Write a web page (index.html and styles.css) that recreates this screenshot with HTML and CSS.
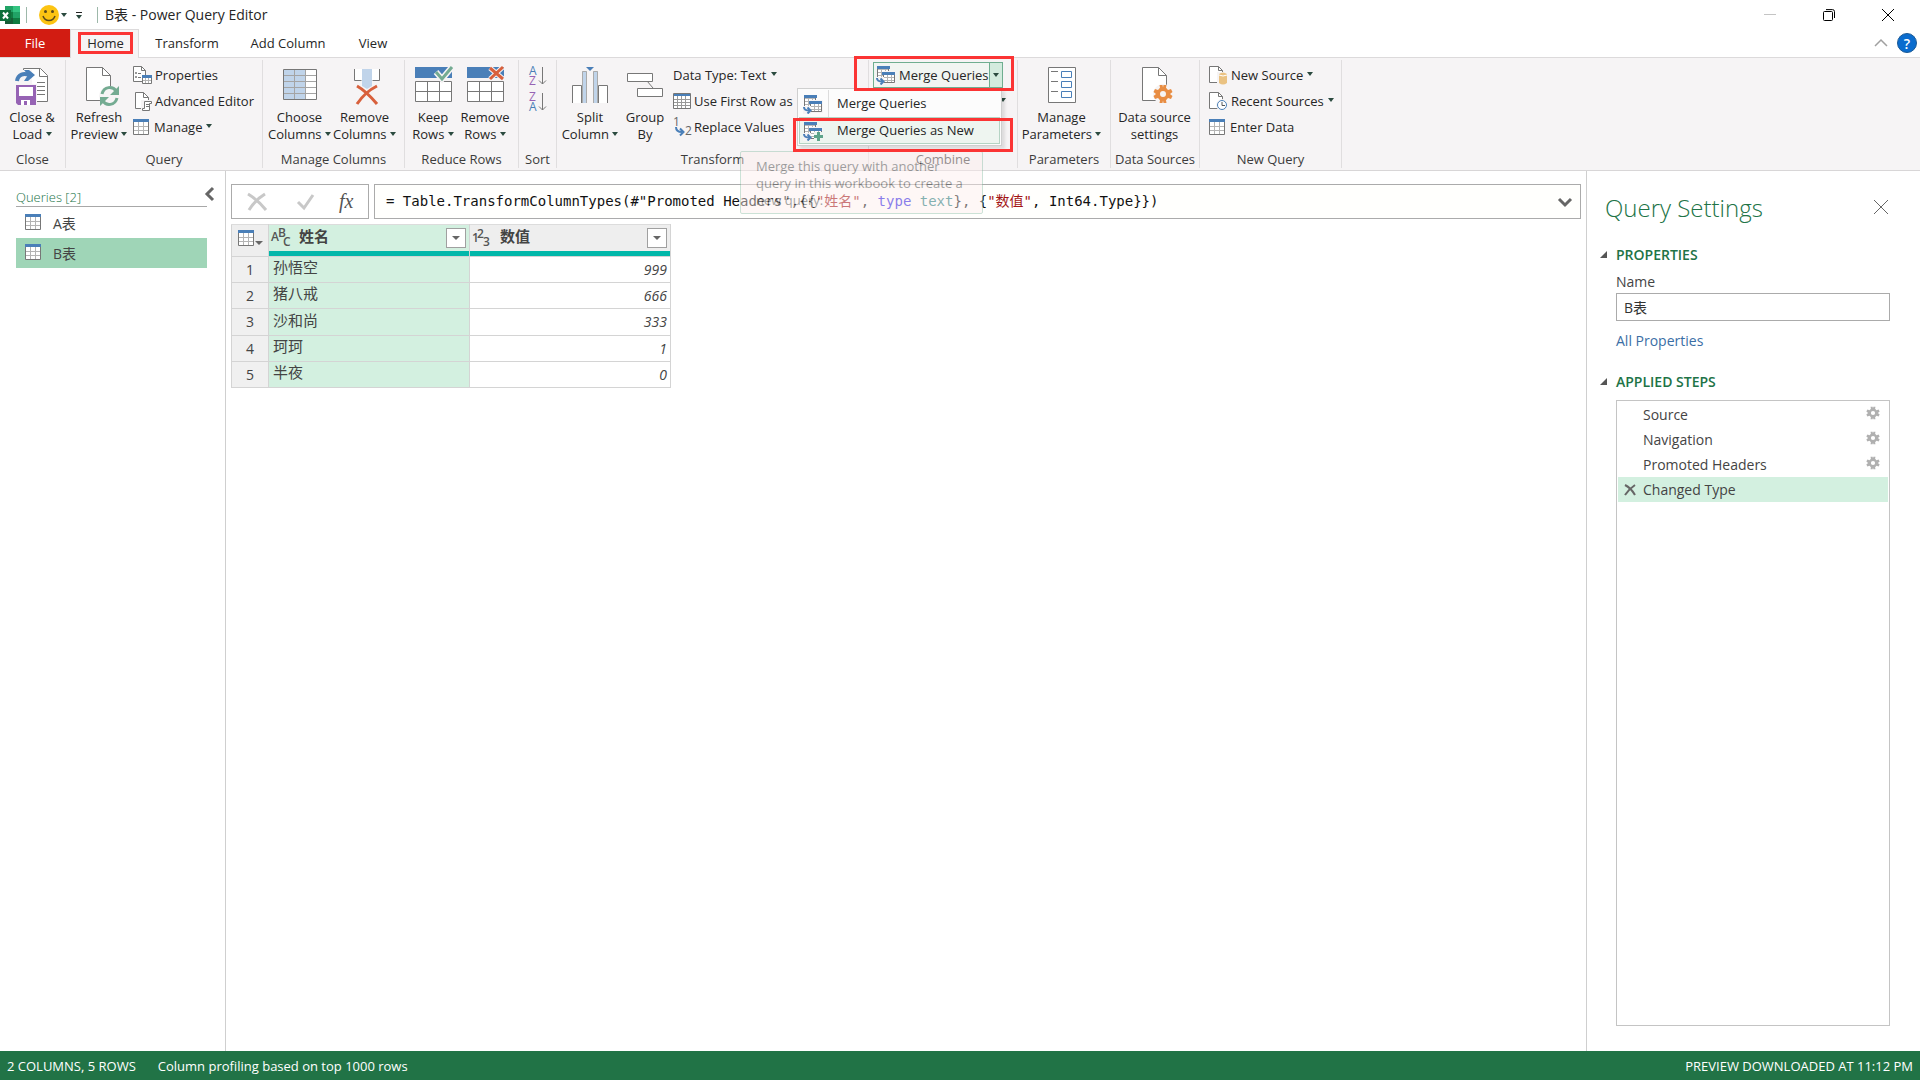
FILE: index.html
```html
<!DOCTYPE html>
<html lang="en">
  <head>
    <meta charset="UTF-8" />
    <meta name="viewport" content="width=device-width, initial-scale=1.0" />
    <title>B表 - Power Query Editor</title>
    <link rel="stylesheet" href="styles.css">
  </head>

  <body>
    <!-- shared icons -->
    <svg class="defs" width="0" height="0">
      <symbol id="i-table" viewBox="0 0 16 16">
        <path d="M.5 2.5h15v13H.5z" fill="#fff" stroke="#777" />
        <path d="M1 7.5h14M1 11.5h14M5.5 3v12M10.5 3v12" stroke="#b4b4b4" fill="none" />
        <path d="M0 0h16v3H0z" fill="#4a7fb8" />
      </symbol>
      <symbol id="i-gear" viewBox="0 0 20 20">
        <path fill-rule="evenodd" d="M7 3.800 6.500 1h3l.5 2.500L10.500 1h3L13 3.800l2 2.200 3-1 1.500 3-2.500 2 2.500 2-1.500 3-3-1-2 2.200.5 2.800h-3l-.5-2.500L9.500 19h-3L7 16.200 5 14l-3 1-1.500-3L3 10 .5 8 2 5l3 1zM10 7a3 3 0 1 0 0 6 3 3 0 0 0 0-6z" />
      </symbol>
      <symbol id="i-merge" viewBox="0 0 20 20">
        <path d="M1.500 4v9h11V4z" fill="#fff" stroke="#777" />
        <path d="M2 7.500h10M2 10.500h10M5.500 4v9M9.500 4v9" stroke="#b4b4b4" />
        <path d="M1 1h13v3H1z" fill="#4a7fb8" />
        <path d="M7 6h13v13H7z" fill="#f6f4f5" />
        <path d="M7.500 9.500h11v8h-11z" fill="#fff" stroke="#777" />
        <path d="M8 12.500h10M8 15.500h10M11.500 10v7M15.500 10v7" stroke="#b4b4b4" />
        <path d="M6 7h13v3H6z" fill="#4a7fb8" />
        <path d="M0 12h8v8H0z" fill="#f6f4f5" />
        <path d="M1 13c0 3 2 3.500 6 3.500M4.500 13.500l3 3-3 3" fill="none" stroke="#4a7fb8" stroke-width="2" />
      </symbol>
    </svg>

    <header class="titlebar">
      <svg class="excel" width="20" height="18" viewBox="0 0 20 18">
        <path d="M5 0h8v6H5z" fill="#21a366" /><path d="M13 0h7v6h-7z" fill="#33c481" />
        <path d="M5 6h8v6H5z" fill="#107c41" /><path d="M13 6h7v6h-7z" fill="#21a366" />
        <path d="M5 12h15v6H5z" fill="#185c37" /><path d="M13 12h7v6h-7z" fill="#107c41" />
        <path d="M0 4h11v11H0z" fill="#0f6f3a" />
        <path d="M3 6.500l5 6M8 6.500l-5 6" stroke="#fff" stroke-width="2" />
      </svg>
      <span class="bar"></span>
      <button class="plain smiley" aria-label="Send a smile">
        <svg width="20" height="20" viewBox="0 0 20 20">
          <circle cx="10" cy="10" r="10" fill="#fcc412" />
          <circle cx="6.500" cy="6.500" r="1.500" fill="#5b4a1a" /><circle cx="13.500" cy="6.500" r="1.500" fill="#5b4a1a" />
          <path d="M4 11c2 6 10 6 12 0" fill="none" stroke="#5b4a1a" stroke-width="1.500" />
        </svg>
        <i class="caret"></i>
      </button>
      <button class="plain qat" aria-label="Customize toolbar"><i></i><i class="caret"></i></button>
      <span class="bar"></span>
      <h1>B表 - Power Query Editor</h1>
      <div class="window-buttons">
        <button class="plain" aria-label="Minimize"><svg width="12" height="12"><path d="M0 5.500h12" stroke="#c4c4c4" /></svg></button>
        <button class="plain" aria-label="Restore"><svg width="12" height="12" viewBox="0 0 12 12" fill="none" stroke="#000"><rect x=".5" y="2.500" width="9" height="9" rx="1" /><path d="M3 .6h6.500q2 0 2 2V9" /></svg></button>
        <button class="plain" aria-label="Close"><svg width="12" height="12"><path d="M0 0l12 12M12 0L0 12" stroke="#000" /></svg></button>
      </div>
    </header>

    <nav class="tabs">
      <button class="file">File</button>
      <button class="active"><span class="mark-home">Home</span></button>
      <button class="t-transform">Transform</button>
      <button class="t-add">Add Column</button>
      <button class="t-view">View</button>
      <div class="help">
        <button class="plain" aria-label="Collapse ribbon"><svg width="12" height="8"><path d="M0 7l6-6 6 6" fill="none" stroke="#a0a0a0" stroke-width="1.500" /></svg></button>
        <button class="help-btn" aria-label="Help">?</button>
      </div>
    </nav>

    <section class="ribbon">
      <div class="group g-close">
        <div class="tools">
          <button class="big">
            <svg width="40" height="40" viewBox="0 0 40 40">
              <path d="M11.500 2.500h17l7 7v26h-22z" fill="#fff" stroke="#777" />
              <path d="M27.500 2.500v8h8M25 16.500h8M25 20.500h8M25 24.500h8M25 28.500h8" fill="none" stroke="#777" />
              <path d="M3 4h17v15H3zM3 18h22v22H3z" fill="#f6f4f5" />
              <path d="M5 15c1-7 7-8 12-6" fill="none" stroke="#4a7fb8" stroke-width="4" />
              <path d="M12 4h5l6 5-7 6h-4l4-6z" fill="#4a7fb8" />
              <path d="M4 19h20v20H6l-2-2z" fill="#9663b4" />
              <path d="M7 21h14v9H7z" fill="#fff" /><path d="M9 34h9v5H9z" fill="#fff" /><path d="M12 35h3v4h-3z" fill="#9663b4" />
            </svg>
            <span>Close &amp;</span><span>Load <i class="caret"></i></span>
          </button>
        </div>
        <p>Close</p>
      </div>

      <div class="group g-query">
        <div class="tools">
          <button class="big">
            <svg width="40" height="40" viewBox="0 0 40 40">
              <path d="M7.500 1.500h16l8 8v25h-24z" fill="#fff" stroke="#777" /><path d="M23.500 1.500v8h8" fill="none" stroke="#777" />
              <circle cx="30" cy="30" r="10" fill="#f6f4f5" />
              <path d="M23 28c2-8 11-8 14-3M38 32c-2 8-11 8-14 3" fill="none" stroke="#74ab92" stroke-width="3" />
              <path d="M40 20v9h-9zM21 40v-9h9z" fill="#74ab92" />
            </svg>
            <span>Refresh</span><span>Preview <i class="caret"></i></span>
          </button>
          <div class="rows">
            <button class="small">
              <svg width="20" height="20" viewBox="0 0 20 20"><path d="M1.500 1.500h8l4 4v11h-12z" fill="#fff" stroke="#777" /><path d="M9.500 1.500v4h4M6 8.500h3M6 12.500h3" fill="none" stroke="#777" /><path d="M3 7h2v2H3zM3 11h2v2H3z" fill="#999" /><path d="M10.500 11.500h9v7h-9z" fill="#fff" stroke="#777" /><path d="M11 15.500h8M13.500 12v6M16.500 12v6" stroke="#b4b4b4" /><path d="M10 10h10v3H10z" fill="#4a7fb8" /></svg>
              Properties
            </button>
            <button class="small">
              <svg width="20" height="20" viewBox="0 0 20 20"><path d="M3.500 1.500h8l5 5v11h-13z" fill="#fff" stroke="#777" /><path d="M11.500 1.500v5h5" fill="none" stroke="#777" /><path d="M9 9h11v11H9z" fill="#f6f4f5" /><path d="M12.500 10.500h7v2h-2v7h-7v-2h2z" fill="#fff" stroke="#777" /><path d="M14 13.500h3M14 15.500h3" stroke="#777" /></svg>
              Advanced Editor
            </button>
            <button class="small"><svg width="16" height="16"><use href="#i-table" /></svg>Manage <i class="caret"></i></button>
          </div>
        </div>
        <p>Query</p>
      </div>

      <div class="group g-columns">
        <div class="tools">
          <button class="big">
            <svg width="40" height="40" viewBox="0 0 40 40">
              <path d="M3.500 3.500h33v30h-33z" fill="#fff" /><path d="M4 4h22v29H4z" fill="#c0d4ea" />
              <path d="M4 9.500h32M4 15.500h32M4 21.500h32M4 27.500h32M14.500 4v29M25.500 4v29" stroke="#a4a4a4" />
              <path d="M3.500 3.500h33v30h-33z" fill="none" stroke="#777" />
            </svg>
            <span>Choose</span><span>Columns <i class="caret"></i></span>
          </button>
          <button class="big">
            <svg width="40" height="40" viewBox="0 0 40 40">
              <path d="M9 3h26v12H9z" fill="#fff" />
              <path d="M9.500 3v11.500h7M34.500 3v11.500h-7" fill="none" stroke="#777" />
              <path d="M17 3h10v17l-5 3-5-3z" fill="#c0d4ea" />
              <path d="M12 20q9 5 20 18M32 20Q20 26 12 38" fill="none" stroke="#d8603c" stroke-width="3" />
            </svg>
            <span>Remove</span><span>Columns <i class="caret"></i></span>
          </button>
        </div>
        <p>Manage Columns</p>
      </div>

      <div class="group g-rows">
        <div class="tools">
          <button class="big">
            <svg width="40" height="40" viewBox="0 0 40 40">
              <path d="M2 1h37v11H2z" fill="#4a7fb8" /><path d="M2.500 15.500h36v20h-36z" fill="#fff" stroke="#777" />
              <path d="M3 25.500h35M14.500 16v19M26.500 16v19" stroke="#777" />
              <path d="M23 6l6 7L39 1" fill="none" stroke="#f6f4f5" stroke-width="6" /><path d="M23 6l6 7L39 1" fill="none" stroke="#74ab92" stroke-width="3" />
            </svg>
            <span>Keep</span><span>Rows <i class="caret"></i></span>
          </button>
          <button class="big">
            <svg width="40" height="40" viewBox="0 0 40 40">
              <path d="M2 1h37v11H2z" fill="#4a7fb8" /><path d="M2.500 15.500h36v20h-36z" fill="#fff" stroke="#777" />
              <path d="M3 25.500h35M14.500 16v19M26.500 16v19" stroke="#777" />
              <path d="M25 2l13 11M38 1L25 13" stroke="#f6f4f5" stroke-width="5" /><path d="M25 2l13 11M38 1L25 13" stroke="#d8603c" stroke-width="3" />
            </svg>
            <span>Remove</span><span>Rows <i class="caret"></i></span>
          </button>
        </div>
        <p>Reduce Rows</p>
      </div>

      <div class="group g-sort">
        <div class="tools">
          <button class="plain" aria-label="Sort ascending">
            <svg width="18" height="20" viewBox="0 0 18 20"><text x="0" y="9" fill="#4a7fb8">A</text><text x="0" y="19" fill="#9663b4">Z</text><path d="M13.500 1v17M10 14.500l3.500 3.500 3.500-3.500" fill="none" stroke="#777" /></svg>
          </button>
          <button class="plain" aria-label="Sort descending">
            <svg width="18" height="20" viewBox="0 0 18 20"><text x="0" y="9" fill="#9663b4">Z</text><text x="0" y="19" fill="#4a7fb8">A</text><path d="M13.500 1v17M10 14.500l3.500 3.500 3.500-3.500" fill="none" stroke="#777" /></svg>
          </button>
        </div>
        <p>Sort</p>
      </div>

      <div class="group g-transform">
        <div class="tools">
          <button class="big">
            <svg width="40" height="40" viewBox="0 0 40 40">
              <path d="M2.500 37V19.500h9V37M28.500 37V19.500h9V37" fill="#fff" stroke="#777" />
              <path d="M12 5h5v32h-5zM23 5h5v32h-5z" fill="#c0d4ea" /><path d="M17 5h6v32h-6z" fill="#f6f4f5" />
              <path d="M12.500 37V5.500h4V37M23.500 37V5.500h4V37" fill="none" stroke="#aaa" />
              <path d="M16 1h8l-4 4z" fill="#4a7fb8" />
            </svg>
            <span>Split</span><span>Column <i class="caret"></i></span>
          </button>
          <button class="big">
            <svg width="40" height="40" viewBox="0 0 40 40">
              <path d="M22 15l6 7" stroke="#777" /><path d="M2.500 7.500h25v8h-25zM12.500 22.500h25v8h-25z" fill="#fff" stroke="#777" />
            </svg>
            <span>Group</span><span>By</span>
          </button>
          <div class="rows">
            <button class="small">Data Type: Text <i class="caret"></i></button>
            <button class="small"><svg width="18" height="16" viewBox="0 0 18 16"><path d="M.5.500h17v15H.5z" fill="#fff" stroke="#777" /><path d="M1 6.500h16M1 9.500h16M1 12.500h16M4.500 3v12M8.500 3v12M12.500 3v12" stroke="#999" /><path d="M1 1h16v2H1z" fill="#4a7fb8" /></svg>Use First Row as</button>
            <button class="small"><svg width="18" height="20" viewBox="0 0 18 20"><text x="0" y="9" fill="#666">1</text><text x="12" y="18" fill="#666">2</text><path d="M3 10q0 5 6 5M7 11.500l3.500 3.500L7 18.500" fill="none" stroke="#4a7fb8" stroke-width="2" /></svg>Replace Values</button>
          </div>
        </div>
        <p>Transform</p>
      </div>

      <div class="group g-combine">
        <div class="tools">
          <div class="merge">
            <button class="merge-main"><svg width="20" height="20"><use href="#i-merge" /></svg>Merge Queries</button>
            <button class="merge-drop" aria-label="More merge options"><i class="caret"></i></button>
            <div class="menu">
              <button><svg width="20" height="20"><use href="#i-merge" /></svg><span>Merge Queries</span></button>
              <button class="hover"><svg width="20" height="20" viewBox="0 0 20 20"><use href="#i-merge" /><path d="M11 11h9v9h-9z" fill="#eef5f0" /><path d="M15.500 11v9M11 15.500h9" stroke="#5da48a" stroke-width="3" /></svg><span>Merge Queries as New</span></button>
            </div>
            <div class="tooltip">Merge this query with another query in this workbook to create a new query.</div>
            <div class="mark mark-button"></div>
            <div class="mark mark-item"></div>
          </div>
          <button class="small append" aria-label="Append queries"><i class="caret"></i></button>
        </div>
        <p>Combine</p>
      </div>

      <div class="group g-params">
        <div class="tools">
          <button class="big">
            <svg width="40" height="40" viewBox="0 0 40 40">
              <path d="M6.500 1.500h27v35h-27z" fill="#fff" stroke="#777" /><path d="M9 5.500h7M9 15.500h7M9 25.500h7" stroke="#777" />
              <path d="M19.500 5.500h10v6h-10zM19.500 15.500h10v6h-10zM19.500 25.500h10v6h-10z" fill="none" stroke="#4a7fb8" />
            </svg>
            <span>Manage</span><span>Parameters <i class="caret"></i></span>
          </button>
        </div>
        <p>Parameters</p>
      </div>

      <div class="group g-sources">
        <div class="tools">
          <button class="big">
            <svg width="40" height="40" viewBox="0 0 40 40">
              <path d="M7.500 1.500h16l8 8v25h-24z" fill="#fff" stroke="#777" /><path d="M23.500 1.500v8h8" fill="none" stroke="#777" />
              <circle cx="28" cy="28" r="10" fill="#f6f4f5" />
              <svg x="18" y="18" width="20" height="20"><use href="#i-gear" fill="#e88d43" /></svg>
            </svg>
            <span>Data source</span><span>settings</span>
          </button>
        </div>
        <p>Data Sources</p>
      </div>

      <div class="group g-new">
        <div class="tools">
          <div class="rows">
            <button class="small">
              <svg width="20" height="20" viewBox="0 0 20 20"><path d="M1.500 1.500h9l4 4v12h-13z" fill="#fff" stroke="#777" /><path d="M10.500 1.500v4h4" fill="none" stroke="#777" /><path d="M9 7h11v13H9z" fill="#f6f4f5" /><path d="M11 9v9q4 3 8 0V9q-4-3-8 0z" fill="#eac282" /><path d="M11 10q4 2 8 0" fill="none" stroke="#fff" /></svg>
              New Source <i class="caret"></i>
            </button>
            <button class="small">
              <svg width="20" height="20" viewBox="0 0 20 20"><path d="M1.500 1.500h9l4 4v12h-13z" fill="#fff" stroke="#777" /><path d="M10.500 1.500v4h4" fill="none" stroke="#777" /><circle cx="14" cy="14" r="6" fill="#f6f4f5" /><circle cx="14" cy="14" r="4.500" fill="#fff" stroke="#4a7fb8" /><path d="M14 11v3.500h3" fill="none" stroke="#555" /></svg>
              Recent Sources <i class="caret"></i>
            </button>
            <button class="small"><svg width="16" height="16"><use href="#i-table" /></svg>Enter Data</button>
          </div>
        </div>
        <p>New Query</p>
      </div>
    </section>

    <main>
      <aside class="queries">
        <div class="queries-head">
          <h2>Queries [2]</h2>
          <button class="plain" aria-label="Collapse"><svg width="9" height="14"><path d="M8 1L2 7l6 6" fill="none" stroke="#666" stroke-width="3" /></svg></button>
        </div>
        <a href="#a"><svg width="16" height="16"><use href="#i-table" /></svg>A表</a>
        <a href="#b" class="selected"><svg width="16" height="16"><use href="#i-table" /></svg>B表</a>
      </aside>

      <section class="editor">
        <div class="formula">
          <div class="formula-buttons">
            <button class="plain" aria-label="Cancel"><svg width="20" height="18"><path d="M1 1q10 6 18 16M18 1Q8 7 2 17" fill="none" stroke="#c8c8c8" stroke-width="3" /></svg></button>
            <button class="plain" aria-label="Accept"><svg width="18" height="16"><path d="M1 8l6 6L16 1" fill="none" stroke="#c8c8c8" stroke-width="3" /></svg></button>
            <button class="plain fx" aria-label="Add step">fx</button>
          </div>
          <div class="formula-box">
            <code>= Table.TransformColumnTypes(#"Promoted Headers",{{<b>"姓名"</b>, <em>type</em> <u>text</u>}, {<b>"数值"</b>, Int64.Type}})</code>
            <button class="plain" aria-label="Expand"><svg width="14" height="10"><path d="M1 2l6 6 6-6" fill="none" stroke="#666" stroke-width="3" /></svg></button>
          </div>
        </div>

        <table>
          <thead>
            <tr>
              <th class="corner"><div><svg width="16" height="16"><use href="#i-table" /></svg><i class="caret"></i></div></th>
              <th class="picked"><div><svg width="20" height="20"><text x="0" y="13">A</text><text x="7" y="9">B</text><text x="12" y="18">C</text></svg><span>姓名</span><button aria-label="Filter"><i class="caret"></i></button></div></th>
              <th class="other"><div><svg width="20" height="20"><text x="0" y="14">1</text><text x="5" y="10">2</text><text x="11" y="18">3</text></svg><span>数值</span><button aria-label="Filter"><i class="caret"></i></button></div></th>
            </tr>
          </thead>
          <tbody>
            <tr><td>1</td><td>孙悟空</td><td>999</td></tr>
            <tr><td>2</td><td>猪八戒</td><td>666</td></tr>
            <tr><td>3</td><td>沙和尚</td><td>333</td></tr>
            <tr><td>4</td><td>珂珂</td><td>1</td></tr>
            <tr><td>5</td><td>半夜</td><td>0</td></tr>
          </tbody>
        </table>
      </section>

      <aside class="settings">
        <div class="settings-head">
          <h2>Query Settings</h2>
          <button class="plain" aria-label="Close pane"><svg width="14" height="14"><path d="M0 0l14 14M14 0L0 14" stroke="#666" /></svg></button>
        </div>
        <h3>PROPERTIES</h3>
        <label for="name">Name</label>
        <input type="text" id="name" value="B表" />
        <a href="#properties">All Properties</a>
        <h3>APPLIED STEPS</h3>
        <ul>
          <li>Source<svg width="14" height="14"><use href="#i-gear" /></svg></li>
          <li>Navigation<svg width="14" height="14"><use href="#i-gear" /></svg></li>
          <li>Promoted Headers<svg width="14" height="14"><use href="#i-gear" /></svg></li>
          <li class="selected"><button class="plain" aria-label="Delete step"><svg width="12" height="12"><path d="M1 1q6 3 10 10M11 1Q5 5 1 11" fill="none" stroke="#666" stroke-width="2" /></svg></button>Changed Type</li>
        </ul>
      </aside>
    </main>

    <footer>
      <span>2 COLUMNS, 5 ROWS</span>
      <span>Column profiling based on top 1000 rows</span>
      <span class="right">PREVIEW DOWNLOADED AT 11:12 PM</span>
    </footer>
  </body>
</html>
```
FILE: styles.css
```css
* {
  box-sizing: border-box;
}

body {
  margin: 0;
  height: 100vh;
  display: flex;
  flex-direction: column;
  background: #fff;
  color: #262626;
  font-family: "Open Sans", "Noto Sans CJK SC", sans-serif;
  font-size: 13px;
  line-height: 17px;
}

h1,
h2,
h3,
p,
ul {
  margin: 0;
  padding: 0;
  font-weight: normal;
}

button {
  padding: 0;
  border: 0;
  background: none;
  color: inherit;
  font: inherit;
  white-space: nowrap;
}

svg {
  flex-shrink: 0;
  overflow: visible;
}

.defs {
  position: absolute;
}

.plain {
  display: flex;
  align-items: center;
}

.caret {
  display: inline-block;
  border: 3px solid transparent;
  border-top: 4px solid #2b4a3f;
  border-bottom: 0;
  vertical-align: 3px;
}

/* title bar */
.titlebar {
  height: 29px;
  display: flex;
  align-items: center;
  flex-shrink: 0;
}

.titlebar .bar {
  width: 1px;
  height: 16px;
  margin-left: 6px;
  background: #9db8aa;
}

.titlebar h1 {
  margin-left: 7px;
  font-size: 14px;
}

.smiley {
  gap: 2px;
  margin-left: 12px;
}

.qat {
  flex-direction: column;
  gap: 2px;
  margin: 2px 9px 0 9px;
}

.qat i:first-child {
  width: 6px;
  height: 1px;
  background: #222;
}

.window-buttons {
  display: flex;
  gap: 47px;
  margin-left: auto;
  padding-right: 26px;
}

/* tabs */
.tabs {
  height: 29px;
  display: flex;
  flex-shrink: 0;
  border-bottom: 1px solid #dcdadb;
}

.tabs .file {
  width: 70px;
  background: #d21c12;
  color: #fff;
}

.tabs .active {
  width: 69px;
  height: 29px;
  padding: 0 0 2px 2px;
  border: 1px solid #dcdadb;
  border-bottom: 0;
  background: #f6f4f5;
}

.mark-home {
  display: block;
  width: 55px;
  height: 22px;
  margin: 0 auto;
  border: 3px solid #fb3434;
  line-height: 16px;
}

.t-transform {
  width: 96px;
}

.t-add {
  width: 106px;
}

.t-view {
  width: 64px;
}

.help {
  display: flex;
  align-items: center;
  gap: 10px;
  margin-left: auto;
  padding-right: 3px;
}

.help-btn {
  width: 20px;
  height: 20px;
  border: 1px solid #1b5a96;
  border-radius: 10px;
  background: #0a6cce;
  color: #fff;
  font-size: 14px;
  font-weight: 600;
}

/* ribbon */
.ribbon {
  height: 113px;
  display: flex;
  flex-shrink: 0;
  background: #f6f4f5;
  border-bottom: 1px solid #d8d6d7;
}

.group {
  display: flex;
  flex-direction: column;
  flex-shrink: 0;
  margin: 2px 0;
  border-right: 1px solid #e0dedf;
}

.group p {
  color: #3c3c3c;
  text-align: center;
}

.tools {
  display: flex;
  height: 91px;
  padding-top: 2px;
}

.big {
  display: flex;
  flex-direction: column;
  align-items: center;
  padding-top: 4px;
}

.big svg {
  margin-bottom: 3px;
}

.rows {
  display: flex;
  flex-direction: column;
}

.small {
  height: 26px;
  display: flex;
  align-items: center;
  gap: 3px;
}

.small .caret {
  margin: 0 0 3px 1px;
}

.small svg[width="16"] {
  margin: 0 2px 0 1px;
}

.g-close {
  width: 66px;
}

.g-close .big {
  width: 64px;
}

.g-query {
  width: 197px;
}

.g-query .big {
  width: 66px;
}

.g-columns {
  width: 142px;
}

.g-columns .tools {
  padding-left: 4px;
}

.g-columns .big {
  width: 65px;
}

.g-rows {
  width: 114px;
}

.g-rows .tools {
  padding-left: 2px;
}

.g-rows .big {
  width: 52px;
}

.g-sort {
  width: 38px;
}

.g-sort .tools {
  flex-direction: column;
  align-items: center;
  gap: 6px;
  padding-top: 6px;
}

.g-sort text,
.g-transform text {
  font-size: 12px;
}

.g-transform {
  width: 312px;
}

.g-transform .tools {
  padding-left: 2px;
}

.g-transform .big {
  width: 62px;
}

.g-transform .big + .big {
  width: 48px;
}

.g-transform .rows {
  padding-left: 4px;
}

.g-combine {
  width: 149px;
}

.g-combine .tools {
  flex-direction: column;
}

.append {
  margin-left: 130px;
}

.g-params {
  width: 93px;
}

.g-params .big,
.g-sources .big {
  width: 87px;
}

.g-sources {
  width: 89px;
}

.g-new {
  width: 142px;
}

.g-new .tools {
  padding-left: 8px;
}

/* merge split button with its open menu */
.merge {
  position: relative;
  display: flex;
  width: 130px;
  height: 26px;
  margin-left: 4px;
  border: 1px solid #6fae90;
  background: #f1f5f2;
}

.merge-main {
  display: flex;
  align-items: center;
  gap: 3px;
  width: 115px;
  padding-left: 2px;
}

.merge-drop {
  flex: 1;
  border-left: 1px solid #6fae90;
  background: #d3ebde;
}

.menu {
  position: absolute;
  z-index: 3;
  top: 25px;
  right: 0;
  width: 205px;
  padding: 1px;
  border: 1px solid #cfcfcf;
  background: #fcfcfc;
  box-shadow: 3px 3px 3px rgba(0, 0, 0, 0.1);
}

.menu button {
  display: flex;
  align-items: center;
  width: 100%;
  height: 27px;
  padding-left: 4px;
}

.menu span {
  margin-left: 5px;
  padding-left: 8px;
  line-height: 27px;
  border-left: 1px solid #dcdcdc;
}

.menu .hover {
  padding-left: 3px;
  border: 1px solid #b5d4c4;
  background: #eef5f0;
}

.menu .hover span {
  border-color: transparent;
}

.tooltip {
  position: absolute;
  z-index: 2;
  top: 88px;
  left: -134px;
  width: 243px;
  height: 63px;
  padding: 6px 10px 0 15px;
  border: 1px solid #8fbfa8;
  border-radius: 2px;
  background: #fdeeee;
  color: #333;
  opacity: 0.45;
}

.mark {
  position: absolute;
  z-index: 4;
  border: 3px solid #fb3434;
  pointer-events: none;
}

.mark-button {
  top: -7px;
  left: -20px;
  width: 160px;
  height: 35px;
}

.mark-item {
  top: 55px;
  left: -81px;
  width: 220px;
  height: 34px;
}

/* workspace */
main {
  flex: 1;
  display: flex;
  min-height: 0;
}

.queries {
  width: 226px;
  padding: 16px 18px 0 16px;
  border-right: 1px solid #cfcfcf;
  font-size: 14px;
}

.queries-head {
  display: flex;
  justify-content: space-between;
  height: 20px;
  margin-bottom: 1px;
  border-bottom: 1px solid #a8a8a8;
}

.queries-head h2 {
  color: #217346;
  font-size: 13px;
  font-weight: 300;
  line-height: 20px;
}

.queries-head button {
  height: 14px;
  margin-right: -7px;
}

.queries a {
  display: flex;
  align-items: center;
  gap: 12px;
  height: 30px;
  padding-left: 9px;
  color: #444;
  text-decoration: none;
}

.queries a svg {
  margin-bottom: 3px;
}

.queries .selected {
  background: #9fd5b7;
}

.editor {
  flex: 1;
  min-width: 0;
  padding: 13px 5px 0;
}

.formula {
  display: flex;
  gap: 5px;
  height: 35px;
  margin-bottom: 5px;
}

.formula-buttons {
  display: flex;
  align-items: center;
  gap: 30px;
  width: 138px;
  padding-left: 15px;
  border: 1px solid #ababab;
}

.fx {
  color: #555;
  font-family: "Liberation Serif", serif;
  font-size: 20px;
  font-style: italic;
  margin-left: -6px;
}

.formula-box {
  flex: 1;
  display: flex;
  align-items: center;
  justify-content: space-between;
  padding: 0 8px 0 11px;
  border: 1px solid #ababab;
  background: #fffffd;
}

.formula code {
  color: #111;
  font-family: "DejaVu Sans Mono", "Noto Sans CJK SC", monospace;
  font-size: 14px;
  white-space: pre;
}

.formula code * {
  font-weight: normal;
  font-style: normal;
  text-decoration: none;
}

.formula b {
  color: #a31515;
}

.formula em {
  color: #2a20e8;
}

.formula u {
  color: #1f8080;
}

/* data preview */
table {
  width: 440px;
  table-layout: fixed;
  border-collapse: collapse;
  border: 1px solid #cfcfcf;
  color: #444;
  font-size: 14px;
}

th,
td {
  border: 1px solid #d4d4d4;
}

th {
  height: 32px;
  padding: 0;
  border-top-color: #dcdcdc;
  background: #eee;
  text-align: left;
}

th div {
  display: flex;
  align-items: center;
  height: 31px;
  padding: 0 3px 5px 2px;
}

th svg text {
  fill: #555;
  font-size: 12px;
  font-weight: 600;
}

th span {
  margin: 0 auto 4px 8px;
  font-size: 15px;
}

th button {
  width: 20px;
  height: 20px;
  border: 1px solid #a0a0a0;
  background: #fff;
  line-height: 12px;
}

th .caret {
  border-width: 4px 4px 0;
  border-top-color: #666;
}

.corner {
  width: 37px;
}

.corner div {
  gap: 1px;
  padding: 0 0 5px 6px;
}

.corner .caret {
  margin-top: 10px;
}

.picked {
  width: 201px;
}

.picked,
td:nth-child(2) {
  background: #d3f0e0;
}

.picked div,
.other div {
  border-bottom: 5px solid #01b8aa;
  padding-bottom: 0;
}

td {
  height: 26px;
  padding: 0 4px;
  line-height: 22px;
}

tr:nth-child(3) td {
  height: 27px;
}

td:first-child {
  background: #f0f0f0;
  text-align: center;
}

td:nth-child(2) {
  padding-bottom: 5px;
  font-size: 15px;
  line-height: 20px;
}

td:nth-child(3) {
  padding-right: 3px;
  font-size: 14px;
  font-style: italic;
  text-align: right;
}

/* settings pane */
.settings {
  width: 334px;
  display: flex;
  flex-direction: column;
  padding: 19px 30px 25px 29px;
  border-left: 1px solid #cfcfcf;
  color: #444;
  font-size: 14px;
}

.settings-head {
  display: flex;
  align-items: center;
  justify-content: space-between;
  height: 34px;
  margin: 0 2px 21px -11px;
}

.settings-head h2 {
  color: #217346;
  font-size: 24px;
  font-weight: 300;
}

.settings h3 {
  position: relative;
  line-height: 20px;
  color: #217346;
  font-size: 14px;
  font-weight: 600;
}

.settings h3::before {
  content: "";
  position: absolute;
  top: 6px;
  left: -16px;
  border-left: 7px solid transparent;
  border-bottom: 7px solid #555;
}

.settings label {
  margin: 7px 0 1px;
  line-height: 20px;
}

.settings input {
  height: 28px;
  padding: 0 7px;
  border: 1px solid #ababab;
  color: #333;
  font: inherit;
}

.settings a {
  margin: 10px 0 21px;
  line-height: 20px;
  color: #3a6ea5;
  text-decoration: none;
}

.settings ul {
  flex: 1;
  margin-top: 8px;
  padding: 1px 1px 0;
  border: 1px solid #c4c4c4;
  list-style: none;
}

.settings li {
  display: flex;
  align-items: center;
  justify-content: space-between;
  height: 25px;
  padding: 0 8px 0 25px;
}

.settings li > svg {
  margin-bottom: 3px;
  fill: #b0b0b0;
}

.settings .selected {
  justify-content: flex-start;
  gap: 7px;
  padding-left: 6px;
  background: #d3f0e0;
}

/* status bar */
footer {
  height: 29px;
  display: flex;
  align-items: center;
  gap: 22px;
  flex-shrink: 0;
  padding: 2px 7px 0;
  background: #217346;
  color: #fff;
  font-size: 13px;
}

footer .right {
  margin-left: auto;
}
```
